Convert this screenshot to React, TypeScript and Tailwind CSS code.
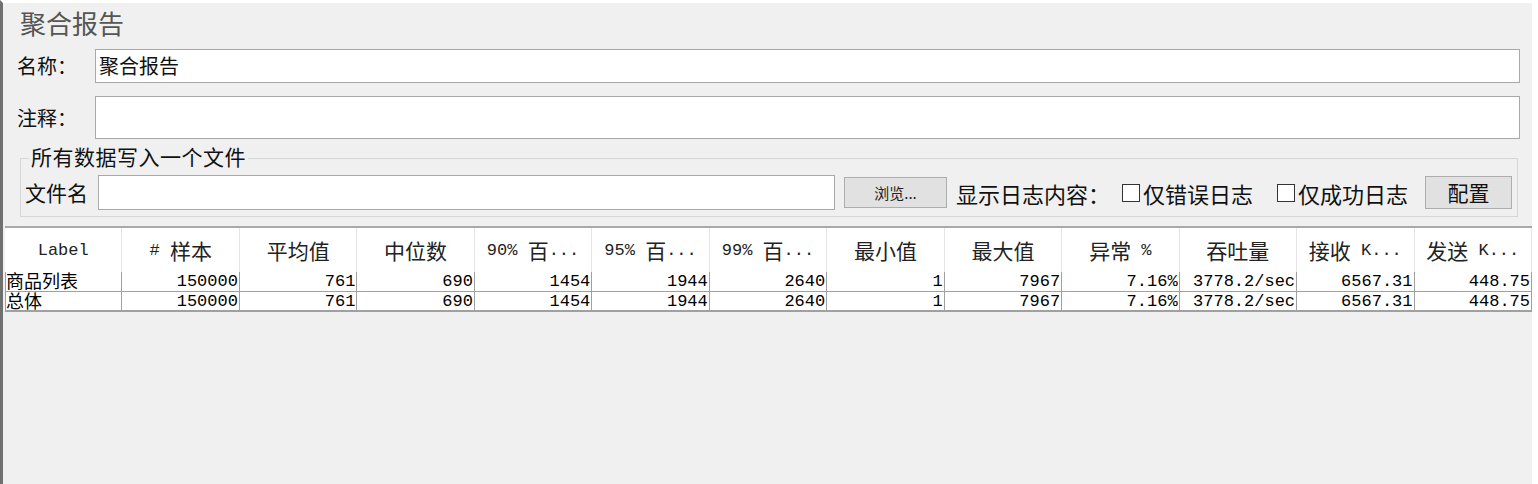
import React from "react";

const cjk = /([\u3000-\u9fff\uff00-\uffef]+)/;

// split text so latin runs use the mono face and CJK runs the larger sans face
const Mixed = ({ text, latin = "text-[17px]", han = "text-[21px]" }: { text: string; latin?: string; han?: string }) => (
  <>
    {text.split(cjk).map((part, i) =>
      part === "" ? null : cjk.test(part) ? (
        <span key={i} className={`${han} font-['Noto_Sans_CJK_SC',sans-serif]`}>
          {part}
        </span>
      ) : (
        <span key={i} className={`${latin} font-['Liberation_Mono',monospace] whitespace-pre`}>
          {part}
        </span>
      )
    )}
  </>
);

const headers = [
  "Label",
  "# 样本",
  "平均值",
  "中位数",
  "90% 百...",
  "95% 百...",
  "99% 百...",
  "最小值",
  "最大值",
  "异常 %",
  "吞吐量",
  "接收 K...",
  "发送 K...",
];

const rows = [
  ["商品列表", "150000", "761", "690", "1454", "1944", "2640", "1", "7967", "7.16%", "3778.2/sec", "6567.31", "448.75"],
  ["总体", "150000", "761", "690", "1454", "1944", "2640", "1", "7967", "7.16%", "3778.2/sec", "6567.31", "448.75"],
];

const App = () => {
  return (
    <div className="w-[1538px] h-[484px] bg-white overflow-hidden font-['Noto_Sans_CJK_SC',sans-serif] text-[#111]">
      <div className="h-full mr-[6px] bg-[#f0f0f0] border-l-[3px] border-l-[#707070] border-t-[3px] border-t-white flex flex-col">
        <div className="h-[40px] pl-[17px] flex items-center text-[26px] text-[#555] leading-none">聚合报告</div>

        <div className="mt-[6px] h-[34px] flex items-center">
          <span className="w-[92px] pl-[14px] text-[20px] leading-none">名称：</span>
          <div className="w-[1425px] h-[34px] bg-white border border-[#a8a8a8] flex items-center pl-[3px] text-[20px] leading-none">
            聚合报告
          </div>
        </div>

        <div className="mt-[13px] h-[43px] flex items-center">
          <span className="w-[92px] pl-[14px] text-[20px] leading-none">注释：</span>
          <div className="w-[1425px] h-[43px] bg-white border border-[#a8a8a8]"></div>
        </div>

        <div className="mt-[19px] ml-[17px] w-[1498px] h-[59px] border border-[#d6d6d6] relative">
          <span className="absolute left-[8px] top-[-13px] bg-[#f0f0f0] px-[2px] text-[21px] tracking-[0.5px] leading-none">
            所有数据写入一个文件
          </span>
          <div className="mt-[16px] flex items-center">
            <span className="w-[77px] pl-[4px] text-[21px] leading-none">文件名</span>
            <div className="w-[737px] h-[35px] bg-white border border-[#a8a8a8]"></div>
            <button className="ml-[9px] w-[103px] h-[31px] bg-[#e1e1e1] border border-[#adadad] text-[15px] leading-none text-[#222]">
              浏览...
            </button>
            <span className="ml-[9px] text-[22px] leading-none">显示日志内容：</span>
            <span className="ml-[12px] w-[18px] h-[18px] bg-white border border-[#333]"></span>
            <span className="ml-[3px] text-[22px] leading-none">仅错误日志</span>
            <span className="ml-[24px] w-[18px] h-[18px] bg-white border border-[#333]"></span>
            <span className="ml-[3px] text-[22px] leading-none">仅成功日志</span>
            <button className="ml-[17px] w-[87px] h-[33px] bg-[#e1e1e1] border border-[#adadad] text-[21px] leading-none">
              配置
            </button>
          </div>
        </div>

        <div className="mt-[9px] ml-[2px] border-t-2 border-t-[#a9a9a9]">
          <div className="grid grid-cols-[repeat(13,minmax(0,1fr))] h-[44px] bg-white">
            {headers.map((h) => (
              <div key={h} className="flex items-center justify-center border-r border-r-[#e4e4e4] text-[#222] leading-none">
                <Mixed text={h} />
              </div>
            ))}
          </div>
          {rows.map((r, ri) => (
            <div
              key={ri}
              className={`grid grid-cols-[repeat(13,minmax(0,1fr))] h-[20px] bg-white border-b border-b-[#a0a0a0] ${ri === 1 ? "border-b-2" : ""}`}
            >
              {r.map((c, ci) => (
                <div
                  key={ci}
                  className={`h-[19px] flex items-center leading-[19px] text-black border-r border-r-[#a0a0a0] ${
                    ci === 0 ? "justify-start border-l border-l-[#a0a0a0]" : "justify-end pr-[1px]"
                  }`}
                >
                  <Mixed
                    text={c}
                    latin="inline-block h-[19px] text-[17px] leading-[19px]"
                    han="inline-block h-[19px] text-[18px] leading-[17px]"
                  />
                </div>
              ))}
            </div>
          ))}
        </div>
      </div>
    </div>
  );
};

export default App;
